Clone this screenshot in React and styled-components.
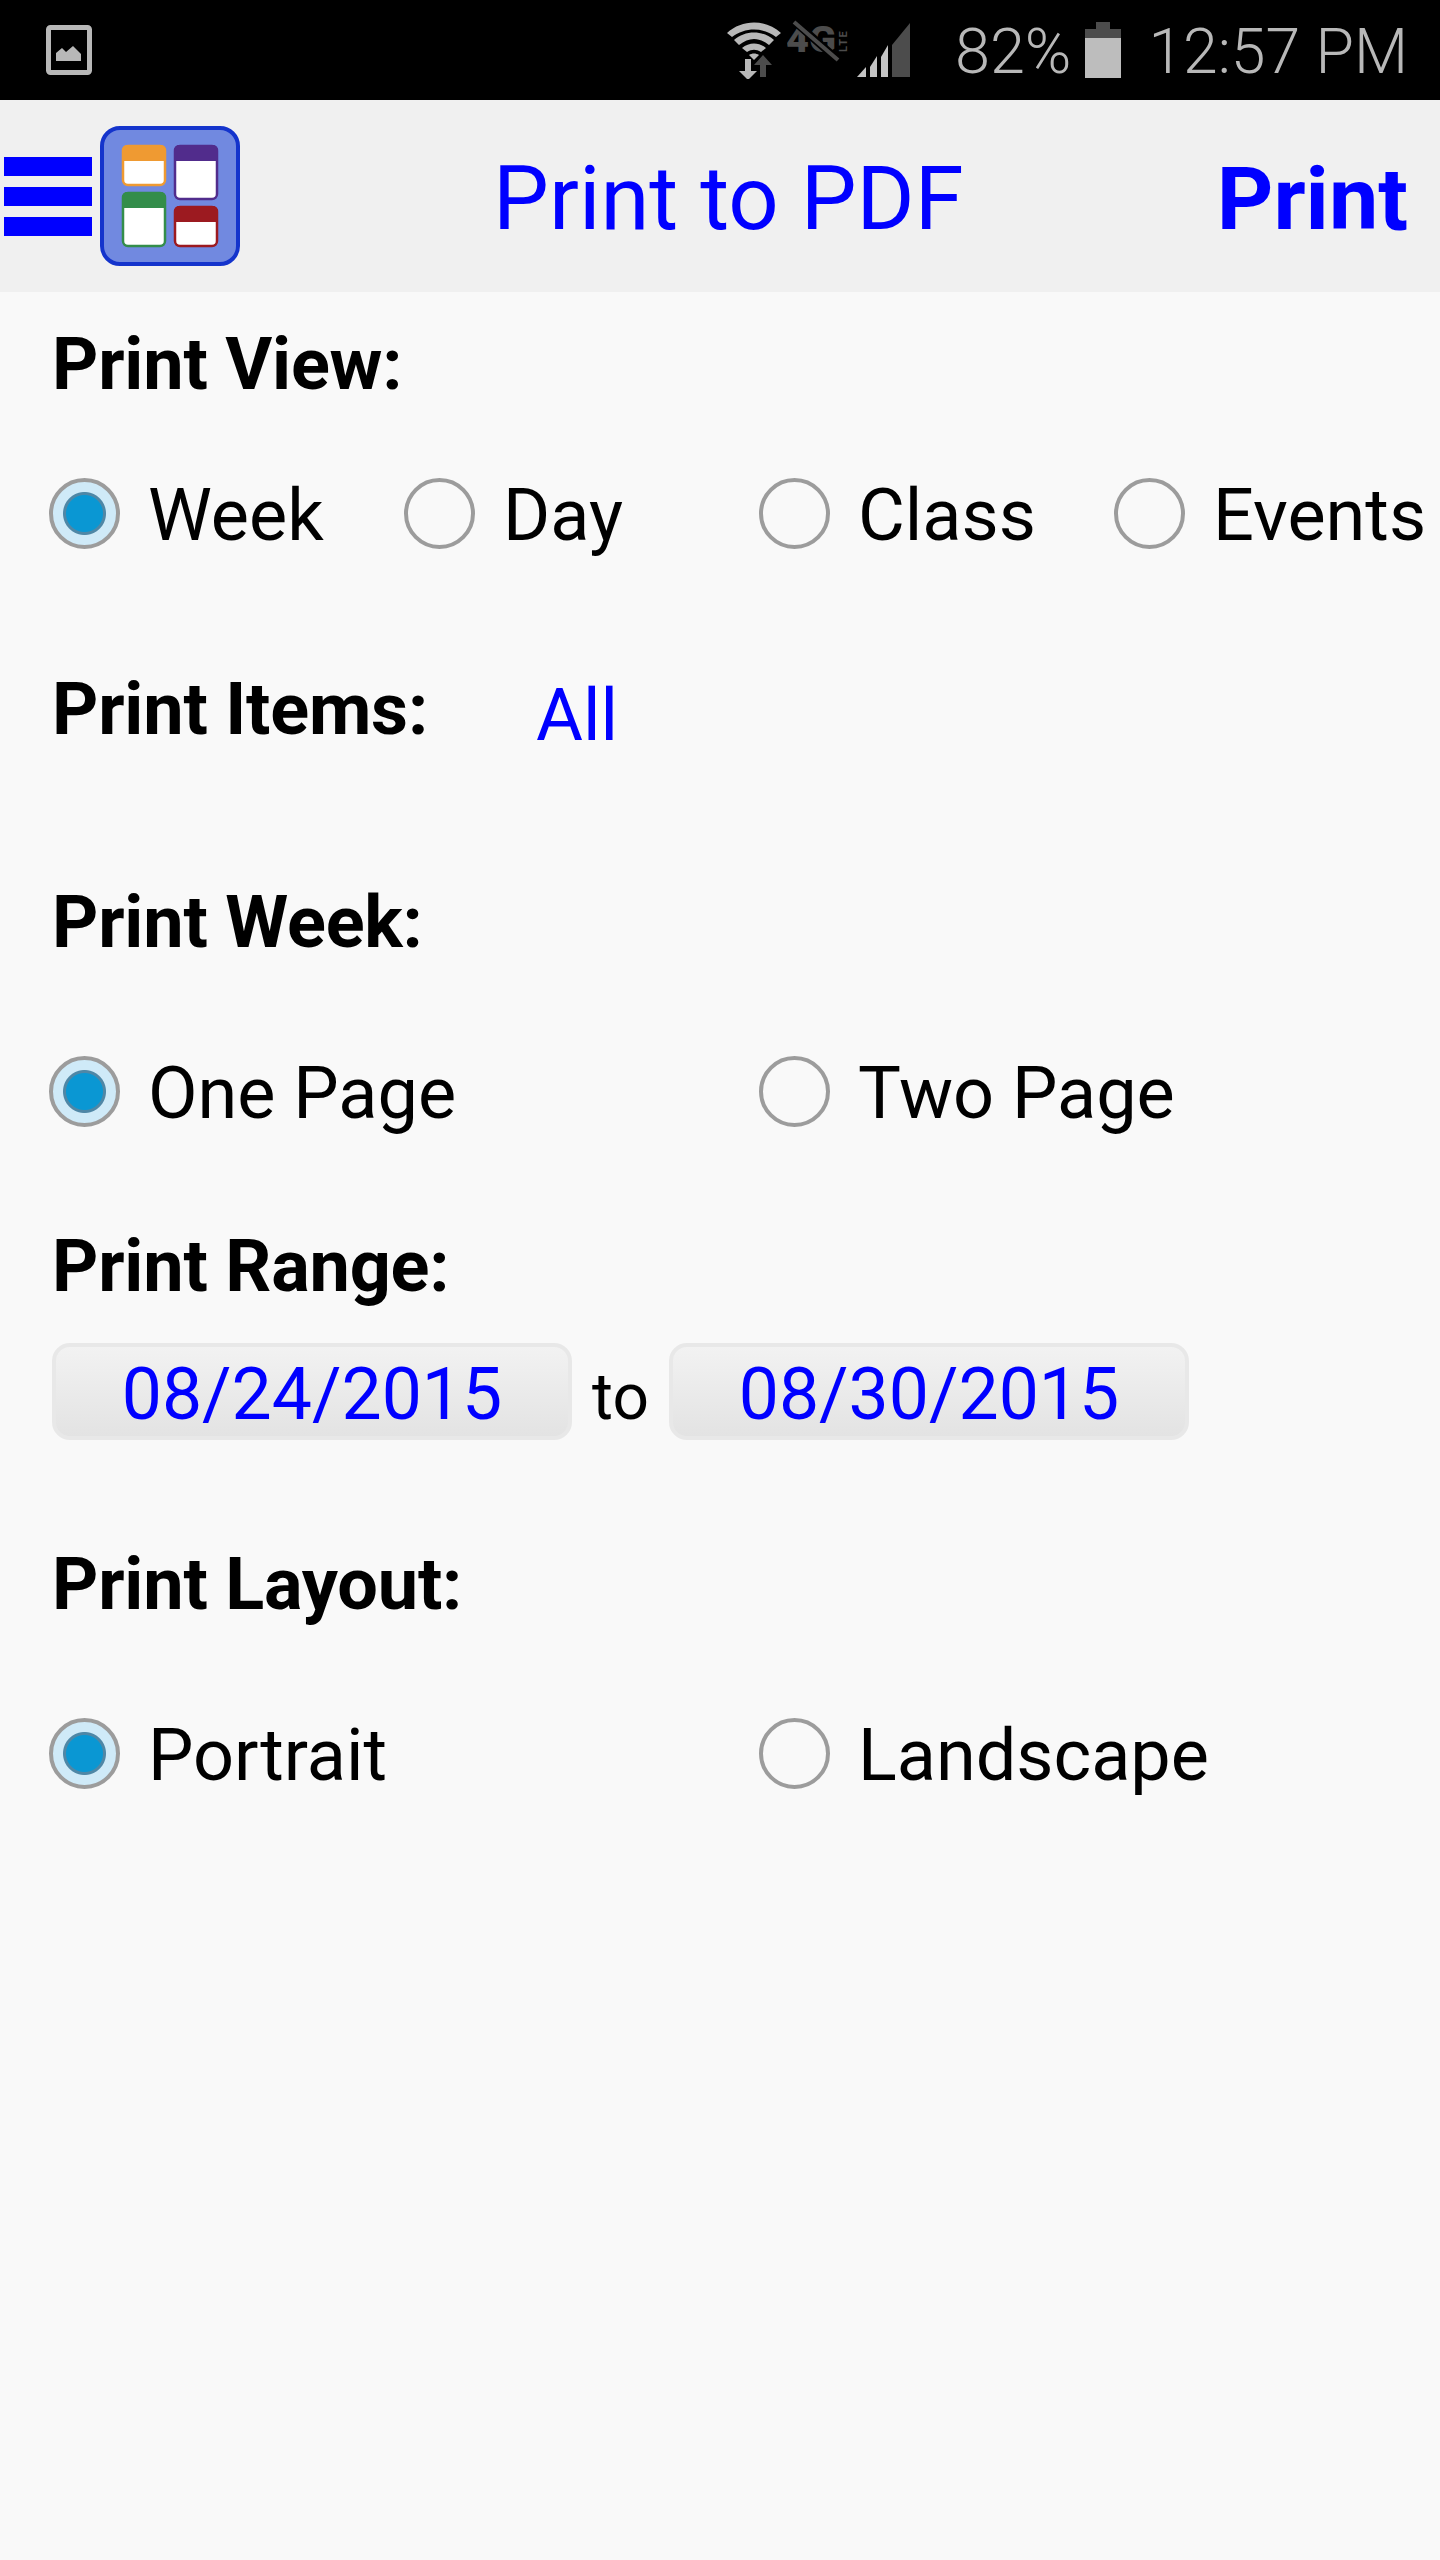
import React from "react"
import styled, { createGlobalStyle } from "styled-components"

const GlobalStyle = createGlobalStyle`
  html, body {
    margin: 0;
    padding: 0;
    background: #f9f9f9;
    font-family: Roboto, "Liberation Sans", sans-serif;
  }
`

const ImageIcon = () => (
  <svg width="46" height="50" viewBox="0 0 46 50">
    <rect x="2.500" y="2.500" width="41" height="45" rx="2" fill="none" stroke="#b8b8b8" strokeWidth="5" />
    <path d="M10 36V28L16 23L20 27L27 21L35 29V36Z" fill="#b8b8b8" />
  </svg>
)

const WifiIcon = () => (
  <svg width="54" height="57" viewBox="0 0 54 57">
    <path d="M0 11C15 -3 39 -3 54 11L49 15C36 5 18 5 5 15Z" fill="#b8b8b8" />
    <path d="M7 18C18 8 36 8 47 18L42 23C32 15 22 15 12 23Z" fill="#b8b8b8" />
    <path d="M15 26C22 20 32 20 39 26L34 30C29 27 25 27 20 30Z" fill="#b8b8b8" />
    <path d="M22 33C25 31 29 31 32 33L27 38Z" fill="#b8b8b8" />
    <path d="M18 37H24V49H30L21 58L12 49H18Z" fill="#b8b8b8" />
    <path d="M33 55H39V43H45L36 33L27 43H33Z" fill="#4c4c4c" />
  </svg>
)

const LteIcon = () => (
  <svg width="64" height="50" viewBox="0 -6 64 50">
    <text x="-1" y="30" fontFamily="Roboto" fontWeight="900" fontSize="36" textLength="50" lengthAdjust="spacingAndGlyphs" fill="#4c4c4c">4G</text>
    <text x="0" y="0" transform="translate(60 30) rotate(-90)" fontFamily="Roboto" fontWeight="700" fontSize="11" letterSpacing="1.500" fill="#4c4c4c">LTE</text>
    <path d="M7 -1L52 39" stroke="#000" strokeWidth="8" />
    <path d="M7 0L51 38" stroke="#4c4c4c" strokeWidth="4" />
  </svg>
)

const SignalIcon = () => (
  <svg width="53" height="54" viewBox="0 0 53 54">
    <path d="M35 22L53 0V54H35Z" fill="#4c4c4c" />
    <path d="M24 34L31 22V54H24Z" fill="#c4c4c4" />
    <path d="M13 44L20 33V54H13Z" fill="#c4c4c4" />
    <path d="M0 54L9 44V54Z" fill="#c4c4c4" />
  </svg>
)

const BatteryIcon = () => (
  <svg width="36" height="56" viewBox="0 0 36 56">
    <rect x="11" y="0" width="14" height="7" fill="#4c4c4c" />
    <rect x="0" y="7" width="36" height="9" fill="#4c4c4c" />
    <rect x="0" y="16" width="36" height="40" fill="#bdbdbd" />
  </svg>
)

const AppIcon = () => (
  <svg width="140" height="140" viewBox="0 0 140 140">
    <rect x="2" y="2" width="136" height="136" rx="18" fill="#7189e0" stroke="#1434cc" strokeWidth="4" />
    <rect x="23" y="20" width="42" height="39" rx="5" fill="#fff" stroke="#ef9a32" strokeWidth="2.500" />
    <path d="M22 35V24a5 5 0 0 1 5-5h34a5 5 0 0 1 5 5v11Z" fill="#ef9a32" />
    <rect x="75" y="20" width="42" height="53" rx="5" fill="#fff" stroke="#512c8c" strokeWidth="2.500" />
    <path d="M74 35V24a5 5 0 0 1 5-5h34a5 5 0 0 1 5 5v11Z" fill="#512c8c" />
    <rect x="23" y="67" width="42" height="53" rx="5" fill="#fff" stroke="#338d4a" strokeWidth="2.500" />
    <path d="M22 82V71a5 5 0 0 1 5-5h34a5 5 0 0 1 5 5v11Z" fill="#338d4a" />
    <rect x="75" y="81" width="42" height="39" rx="5" fill="#fff" stroke="#9c1a20" strokeWidth="2.500" />
    <path d="M74 96V85a5 5 0 0 1 5-5h34a5 5 0 0 1 5 5v11Z" fill="#9c1a20" />
  </svg>
)

const RadioOption = ({ label, checked }) => (
  <Option>
    <RadioCircle $checked={checked} />
    <OptionText>{label}</OptionText>
  </Option>
)

const App = () => {
  return (
    <>
      <GlobalStyle />
      <Page>
        <StatusBar>
          <ImageIcon />
          <StatusRight>
            <WifiIcon />
            <LteSlot><LteIcon /></LteSlot>
            <SignalIcon />
            <Percent>82%</Percent>
            <BatteryIcon />
            <Clock>12:57 PM</Clock>
          </StatusRight>
        </StatusBar>
        <Header>
          <MenuGroup>
            <Hamburger>
              <span />
              <span />
              <span />
            </Hamburger>
            <AppIcon />
          </MenuGroup>
          <Title>Print to PDF</Title>
          <PrintButton>Print</PrintButton>
        </Header>
        <Form>
          <SectionLabel $top={28}>Print View:</SectionLabel>
          <RadioRow $top={61}>
            <RadioOption label="Week" checked />
            <RadioOption label="Day" />
            <RadioOption label="Class" />
            <RadioOption label="Events" />
          </RadioRow>
          <ItemsRow>
            <SectionLabel>Print Items:</SectionLabel>
            <ItemsLink>All</ItemsLink>
          </ItemsRow>
          <SectionLabel $top={123}>Print Week:</SectionLabel>
          <RadioRow $top={81}>
            <RadioOption label="One Page" checked />
            <span />
            <RadioOption label="Two Page" />
            <span />
          </RadioRow>
          <SectionLabel $top={101}>Print Range:</SectionLabel>
          <DateRow>
            <DateButton>08/24/2015</DateButton>
            <ToText>to</ToText>
            <DateButton>08/30/2015</DateButton>
          </DateRow>
          <SectionLabel $top={100}>Print Layout:</SectionLabel>
          <RadioRow $top={81}>
            <RadioOption label="Portrait" checked />
            <span />
            <RadioOption label="Landscape" />
            <span />
          </RadioRow>
        </Form>
      </Page>
    </>
  )
}

export default App

const Page = styled.div`
  width: 1440px;
  height: 2560px;
  overflow: hidden;
  background: #f9f9f9;
`

const StatusBar = styled.div`
  height: 100px;
  background: #000;
  display: flex;
  align-items: center;
  justify-content: space-between;
  padding: 0 32px 0 46px;
  box-sizing: border-box;
`

const StatusRight = styled.div`
  display: flex;
  align-items: center;
`

const LteSlot = styled.div`
  display: flex;
  margin: -18px 6px 0 6px;
`

const Percent = styled.span`
  font-size: 63px;
  font-weight: 300;
  color: #b8b8b8;
  line-height: 100px;
  margin: 4px 14px 0 45px;
`

const Clock = styled.span`
  font-size: 62.500px;
  font-weight: 300;
  color: #b8b8b8;
  line-height: 100px;
  margin: 4px 0 0 27px;
`

const Header = styled.header`
  height: 192px;
  background: #f0f0f0;
  display: flex;
  align-items: center;
  padding-right: 32px;
`

const MenuGroup = styled.div`
  display: flex;
  align-items: center;
  gap: 8px;
  padding-left: 4px;
`

const Hamburger = styled.div`
  width: 88px;
  display: flex;
  flex-direction: column;
  gap: 11px;

  span {
    display: block;
    height: 19px;
    background: #0000ff;
  }
`

const Title = styled.div`
  flex: 1;
  text-align: center;
  font-size: 88.500px;
  color: #0000ff;
  line-height: 100px;
  padding-top: 6px;
`

const PrintButton = styled.div`
  font-size: 88px;
  font-weight: 700;
  color: #0000ff;
  line-height: 100px;
  padding-top: 6px;
`

const Form = styled.main`
  padding-left: 52px;
`

const SectionLabel = styled.div`
  font-size: 72px;
  font-weight: 700;
  letter-spacing: -0.2px;
  color: #000;
  line-height: 90px;
  margin-top: ${props => props.$top || 0}px;
`

const RadioRow = styled.div`
  display: grid;
  grid-template-columns: repeat(4, 355px);
  height: 72px;
  margin-top: ${props => props.$top}px;
`

const Option = styled.div`
  display: flex;
  align-items: center;
  gap: 28px;
  white-space: nowrap;
  margin-left: -3px;
`

const RadioCircle = styled.span`
  flex: none;
  width: 71px;
  height: 71px;
  margin-bottom: 6px;
  box-sizing: border-box;
  border-radius: 50%;
  border: 4px solid #9c9c9c;
  background: ${props =>
    props.$checked
      ? "radial-gradient(circle, #0a97d3 0 18px, #4f87a6 19px 21px, #cfeaf8 22px)"
      : "#f9f9f9"};
`

const OptionText = styled.span`
  font-size: 72px;
  color: #000;
  line-height: 90px;
`

const ItemsRow = styled.div`
  display: flex;
  align-items: center;
  margin-top: 122px;
`

const ItemsLink = styled.span`
  font-size: 72px;
  color: #0000ff;
  line-height: 90px;
  margin-left: 108px;
  position: relative;
  top: 6px;
`

const DateRow = styled.div`
  display: flex;
  align-items: center;
  margin-top: 31px;
`

const DateButton = styled.div`
  width: 520px;
  height: 97px;
  box-sizing: border-box;
  border-radius: 18px;
  border: 4px solid #e8e8e8;
  background: linear-gradient(#f2f2f2, #e3e3e3);
  color: #0000ff;
  font-size: 71.500px;
  line-height: 95px;
  text-align: center;
`

const ToText = styled.span`
  width: 97px;
  text-align: center;
  font-size: 64px;
  color: #000;
  line-height: 97px;
  position: relative;
  top: 6px;
`
